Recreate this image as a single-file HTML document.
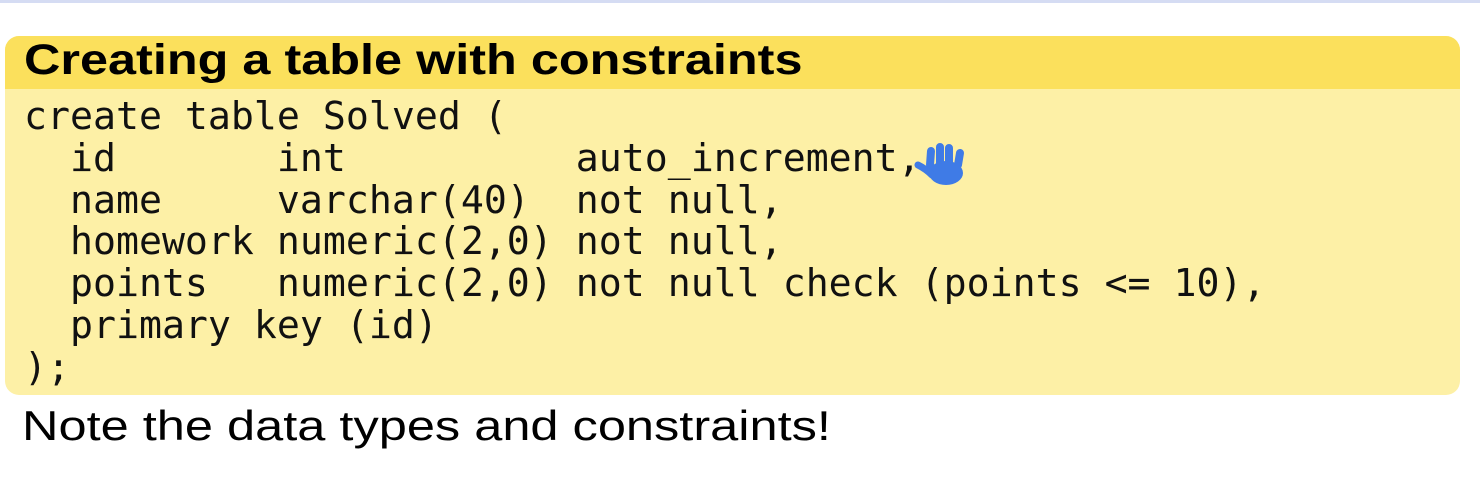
<!DOCTYPE html>
<html><head><style>
body{margin:0;width:1480px;height:479px;background:#fff;position:relative;overflow:hidden}
.top{position:absolute;left:0;top:0;width:1480px;height:3px;background:#d5dcf3}
.box{position:absolute;left:5px;top:36px;width:1455px;height:359px;background:#fdf0a6;border-radius:14px;overflow:hidden}
.hd{height:53px;background:#fbe05c}
.t{position:absolute;left:24px;top:36px;font:bold 43px "Liberation Sans",sans-serif;color:#000;white-space:nowrap;transform-origin:0 0;transform:scaleX(1.172)}
pre{position:absolute;left:24px;top:97px;margin:0;font:38.2px/41.8px "DejaVu Sans Mono",monospace;color:#111}
.n{position:absolute;left:22px;top:402px;font:42px "Liberation Sans",sans-serif;color:#000;white-space:nowrap;transform-origin:0 0;transform:scaleX(1.203)}
</style></head><body>
<div class="top"></div>
<div class="box"><div class="hd"></div></div>
<div class="t">Creating a table with constraints</div>
<pre>create table Solved (
  id       int          auto_increment,
  name     varchar(40)  not null,
  homework numeric(2,0) not null,
  points   numeric(2,0) not null check (points &lt;= 10),
  primary key (id)
);</pre>
<svg style="position:absolute;left:914px;top:143px" width="54" height="46" viewBox="0 0 54 46">
<g fill="#3f7be6" stroke="#3f7be6" stroke-linecap="round">
<path d="M16 22 L17 8 M26 20 L26 4 M35 20 L35 5 M44 22 L46 10" stroke-width="8"/>
<ellipse cx="32" cy="30" rx="17" ry="12" stroke-width="0"/>
<path d="M4 22 Q12 26 18 32" stroke-width="7" fill="none"/>
</g></svg>
<div class="n">Note the data types and constraints!</div>
</body></html>
